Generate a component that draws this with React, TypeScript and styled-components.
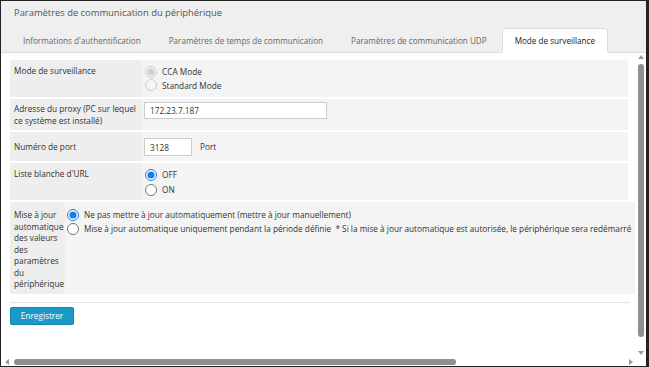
import React from 'react'
import styled, { createGlobalStyle } from 'styled-components'

const variables = {
    text: '#333333',
    muted: '#666666',
    line: '#dcdcdc',
    labelBg: '#eeeeee',
    valueBg: '#f4f4f4',
    thumb: '#8e8e8e',
    blue: '#1b9ac9'
};

const GlobalStyle = createGlobalStyle`
  html, body {
    margin: 0;
    padding: 0;
    background: #ffffff;
  }
  body {
    font-family: "Open Sans", "Noto Sans", sans-serif;
    color: ${variables.text};
  }
  * {
    box-sizing: border-box;
  }
`;

const Window = styled.div`
  width: 649px;
  height: 367px;
  display: flex;
  flex-direction: column;
  background: #efefef;
  border: 1px solid #242424;
  border-right-width: 3px;
  overflow: hidden;
`;
const Title = styled.div`
  height: 26px;
  padding: 6px 0 0 13px;
  font-size: 9.4px;
  line-height: 12px;
  color: #555555;
`;
const TabBar = styled.div`
  display: flex;
  align-items: flex-end;
  height: 26px;
  padding-left: 9px;
  border-bottom: 1px solid ${variables.line};
`;
const Tab = styled.div<{ $active?: boolean }>`
  height: 25px;
  padding: 0 12px;
  margin-right: 2px;
  margin-bottom: -1px;
  display: flex;
  align-items: center;
  font-size: 8.15px;
  white-space: nowrap;
  color: ${p => (p.$active ? '#222222' : variables.muted)};
  background: ${p => (p.$active ? '#ffffff' : 'transparent')};
  border: 1px solid ${p => (p.$active ? variables.line : 'transparent')};
  border-bottom-color: ${p => (p.$active ? '#ffffff' : 'transparent')};
  border-radius: 3px 3px 0 0;
`;
const Body = styled.div`
  flex: 1;
  min-height: 0;
  display: grid;
  grid-template-columns: 1fr 11px;
  grid-template-rows: 1fr 9px;
  background: #ffffff;
`;
const Viewport = styled.div`
  overflow: hidden;
  padding: 7px 0 0 9px;
  font-size: 8.25px;
  line-height: 11.5px;
`;
const Table = styled.div<{ $wide?: boolean }>`
  display: flex;
  flex-direction: column;
  gap: 2px;
  width: ${p => (p.$wide ? '850px' : '618px')};
  margin-bottom: 2px;
`;
const Row = styled.div<{ $label: number }>`
  display: grid;
  grid-template-columns: ${p => p.$label}px 1fr;
  background: ${variables.valueBg};
`;
const LabelCell = styled.div<{ $top?: number; $center?: boolean }>`
  background: ${variables.labelBg};
  padding: ${p => p.$top ?? 5}px 1px 4px 4px;
  align-self: stretch;
  display: flex;
  align-items: ${p => (p.$center ? 'center' : 'flex-start')};
`;
const ValueCell = styled.div<{ $pad: string }>`
  padding: ${p => p.$pad};
  display: flex;
  flex-direction: column;
`;
const RadioItem = styled.label<{ $h: number }>`
  display: flex;
  align-items: center;
  gap: 5px;
  height: ${p => p.$h}px;
  white-space: pre;
  input {
    width: 12px;
    height: 12px;
    margin: 0;
    accent-color: #1a7ee0;
  }
`;
const InlineRow = styled.div`
  display: flex;
  align-items: center;
  gap: 8px;
`;
const TextInput = styled.input<{ $w: number; $h: number }>`
  width: ${p => p.$w}px;
  height: ${p => p.$h}px;
  border: 1px solid #cccccc;
  background: #ffffff;
  padding: 0 5px;
  font-family: inherit;
  font-size: 8.25px;
  color: ${variables.text};
  outline: none;
`;
const Divider = styled.div`
  width: 620px;
  height: 1px;
  background: #e2e2e2;
  margin-top: 8px;
`;
const SaveButton = styled.button`
  margin-top: 4px;
  width: 64px;
  height: 18px;
  border: 1px solid #1384ad;
  border-radius: 2px;
  background: ${variables.blue};
  color: #ffffff;
  font-family: inherit;
  font-size: 8.25px;
  padding: 0;
`;
const VScroll = styled.div`
  display: flex;
  flex-direction: column;
  align-items: center;
  padding: 2px 0 2px 1px;
  background: #ffffff;
`;
const HScroll = styled.div`
  display: flex;
  align-items: center;
  padding: 0 2px 0 4px;
  background: #ffffff;
`;
const Corner = styled.div`
  background: #ffffff;
`;
const Arrow = styled.div<{ $dir: 'up' | 'down' | 'left' | 'right' }>`
  width: 0;
  height: 0;
  flex: none;
  border: 3px solid transparent;
  ${p => p.$dir === 'up' && `border-bottom: 4px solid #9a9a9a; border-top-width: 0;`}
  ${p => p.$dir === 'down' && `border-top: 4px solid #9a9a9a; border-bottom-width: 0;`}
  ${p => p.$dir === 'left' && `border-right: 4px solid #9a9a9a; border-left-width: 0;`}
  ${p => p.$dir === 'right' && `border-left: 4px solid #9a9a9a; border-right-width: 0;`}
`;
const VThumb = styled.div`
  width: 6px;
  height: 273px;
  margin: 5px 0 auto;
  border-radius: 3px;
  background: ${variables.thumb};
`;
const HThumb = styled.div`
  height: 6px;
  width: 442px;
  margin: 0 auto 0 5px;
  border-radius: 3px;
  background: ${variables.thumb};
`;

const tabs = [
    "Informations d'authentification",
    'Paramètres de temps de communication',
    'Paramètres de communication UDP',
    'Mode de surveillance'
];

const App: React.FC = () => {
    return (
        <Window>
            <GlobalStyle />
            <Title>Paramètres de communication du périphérique</Title>
            <TabBar>
                {tabs.map((t, i) => (
                    <Tab key={t} $active={i === 3}>{t}</Tab>
                ))}
            </TabBar>
            <Body>
                <Viewport>
                    <Table>
                        <Row $label={132}>
                            <LabelCell>Mode de surveillance</LabelCell>
                            <ValueCell $pad="5px 2px 5px 3px">
                                <RadioItem $h={13.5}>
                                    <input type="radio" name="mode" defaultChecked disabled />
                                    CCA Mode
                                </RadioItem>
                                <RadioItem $h={13.5}>
                                    <input type="radio" name="mode" disabled />
                                    Standard Mode
                                </RadioItem>
                            </ValueCell>
                        </Row>
                        <Row $label={132}>
                            <LabelCell $top={4}>Adresse du proxy (PC sur lequel ce système est installé)</LabelCell>
                            <ValueCell $pad="3px 2px 7px 2px">
                                <TextInput $w={183} $h={17} defaultValue="172.23.7.187" />
                            </ValueCell>
                        </Row>
                        <Row $label={132}>
                            <LabelCell $center>Numéro de port</LabelCell>
                            <ValueCell $pad="6px 2px 5px 2px">
                                <InlineRow>
                                    <TextInput $w={48} $h={18} defaultValue="3128" />
                                    Port
                                </InlineRow>
                            </ValueCell>
                        </Row>
                    </Table>
                    <Table>
                        <Row $label={132}>
                            <LabelCell>Liste blanche d'URL</LabelCell>
                            <ValueCell $pad="4px 2px 3px 3px">
                                <RadioItem $h={15}>
                                    <input type="radio" name="whitelist" defaultChecked />
                                    OFF
                                </RadioItem>
                                <RadioItem $h={15}>
                                    <input type="radio" name="whitelist" />
                                    ON
                                </RadioItem>
                            </ValueCell>
                        </Row>
                    </Table>
                    <Table $wide>
                        <Row $label={55}>
                            <LabelCell $top={7}>Mise à jour automatique des valeurs des paramètres du périphérique</LabelCell>
                            <ValueCell $pad="6px 2px 4px 2px">
                                <RadioItem $h={14}>
                                    <input type="radio" name="update" defaultChecked />
                                    Ne pas mettre à jour automatiquement (mettre à jour manuellement)
                                </RadioItem>
                                <RadioItem $h={14}>
                                    <input type="radio" name="update" />
                                    {'Mise à jour automatique uniquement pendant la période définie  * Si la mise à jour automatique est autorisée, le périphérique sera redémarré'}
                                </RadioItem>
                            </ValueCell>
                        </Row>
                    </Table>
                    <Divider />
                    <SaveButton>Enregistrer</SaveButton>
                </Viewport>
                <VScroll>
                    <Arrow $dir="up" />
                    <VThumb />
                    <Arrow $dir="down" />
                </VScroll>
                <HScroll>
                    <Arrow $dir="left" />
                    <HThumb />
                    <Arrow $dir="right" />
                </HScroll>
                <Corner />
            </Body>
        </Window>
    )
};

export default App
